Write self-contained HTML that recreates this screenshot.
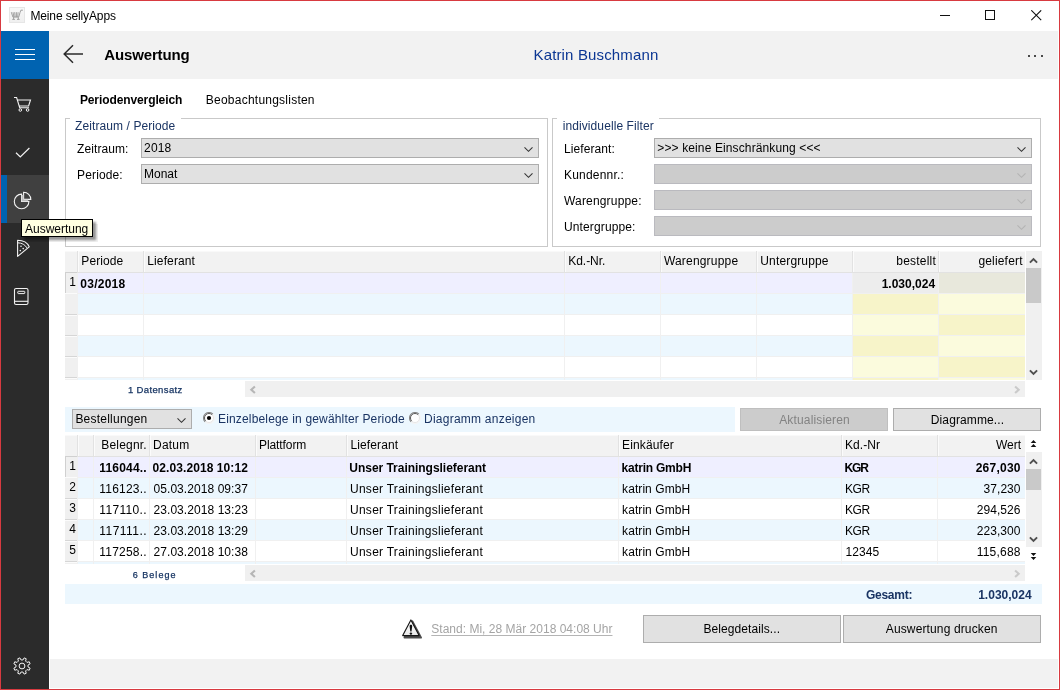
<!DOCTYPE html>
<html lang="de">
<head>
<meta charset="utf-8">
<title>Meine sellyApps</title>
<style>
*{box-sizing:border-box;margin:0;padding:0}
html,body{width:1060px;height:690px;overflow:hidden;background:#fff}
body{font-family:"Liberation Sans",sans-serif;font-size:12px;color:#000;position:relative}
#root{position:absolute;left:0;top:0;width:1060px;height:690px;overflow:hidden;will-change:transform}
#root div,#root svg{position:absolute}
.t{white-space:nowrap;line-height:14px;height:14px}
.b{font-weight:bold}
.navy{color:#1a3463}
.combo{background:#e1e1e1;border:1px solid #adadad}
.combo.dis{background:#cccccc;border-color:#bababf}
.grp{border:1px solid #c9c9c9}
.btn{background:#e1e1e1;border:1px solid #adadad}
.btn.dis{background:#cccccc;border-color:#bfbfbf}
.hd{background:#f2f2f2}
.vl{width:1px;background:#f0f0f0}
.hl{height:1px;background:#f0f0f0}
</style>
</head>
<body>
<div id="root">
<div style="left:0px;top:0px;width:1060px;height:690px;background:#d83a40"></div>
<div style="left:1px;top:1px;width:1058px;height:688px;background:#fff"></div>
<svg style="left:9px;top:7px" width="16" height="16" viewBox="0 0 16 16"><defs><linearGradient id="ig" x1="0" y1="0" x2="0" y2="1"><stop offset="0" stop-color="#f8f8f8"/><stop offset="1" stop-color="#efefef"/></linearGradient></defs><rect x="0" y="0" width="16" height="16" fill="url(#ig)"/><rect x="0.500" y="0.500" width="15" height="15" fill="none" stroke="#e6e6e6"/><path d="M2.300 5.200l1.600 4.900h5.800l1.300-4.500l.900-2.400h2M4 5.200l.900 4.800M5.700 5.200l.400 4.800M7.400 5.200v4.800M9.100 5.200l-.400 4.800" fill="none" stroke="#979797" stroke-width="0.900"/><path d="M4.600 10.200v1.900M9.300 10.200v1.900M3.300 12.400h2.600M8 12.400h2.600" fill="none" stroke="#979797" stroke-width="0.900"/></svg>
<div class="t" style="left:30.40px;top:9px;letter-spacing:-0.129px;">Meine sellyApps</div>
<div style="left:940px;top:15px;width:10px;height:1px;background:#111"></div>
<div style="left:985px;top:10px;width:10px;height:10px;border:1px solid #111"></div>
<svg style="left:1030.6px;top:10px" width="11" height="11" viewBox="0 0 11 11"><path d="M0.3 0.3L10.2 10.2M10.2 0.3L0.3 10.2" stroke="#111" stroke-width="1.1" fill="none"/></svg>
<div style="left:1px;top:31px;width:48px;height:48px;background:#0063b1"></div>
<div style="left:15px;top:49px;width:20px;height:1px;background:#fff"></div>
<div style="left:15px;top:54px;width:20px;height:1px;background:#fff"></div>
<div style="left:15px;top:59px;width:20px;height:1px;background:#fff"></div>
<div style="left:1px;top:79px;width:48px;height:610px;background:#2b2b2b"></div>
<div style="left:1px;top:175px;width:48px;height:48px;background:#404040"></div>
<div style="left:1px;top:175px;width:6px;height:48px;background:#0063b1"></div>
<div style="left:49px;top:31px;width:1009px;height:48px;background:#f2f2f2"></div>
<svg style="left:62px;top:44px" width="23" height="20" viewBox="0 0 23 20"><path d="M21 10H2.2M11 1.3L2.2 10L11 18.7" fill="none" stroke="#2b2b2b" stroke-width="1.5"/></svg>
<div class="t b" style="left:104.30px;top:46px;letter-spacing:-0.147px;font-size:15px;line-height:17px;height:17px;">Auswertung</div>
<div class="t" style="left:533.50px;top:46px;letter-spacing:0.152px;font-size:15px;line-height:17px;height:17px;color:#0b3693">Katrin Buschmann</div>
<div style="left:1027.5px;top:55.3px;width:2.0px;height:2.0px;background:#111;border-radius:1px"></div>
<div style="left:1034.4px;top:55.3px;width:2.0px;height:2.0px;background:#111;border-radius:1px"></div>
<div style="left:1041.3px;top:55.3px;width:2.0px;height:2.0px;background:#111;border-radius:1px"></div>
<div style="left:50px;top:659px;width:1008px;height:29px;background:#f2f2f2"></div>
<svg style="left:13px;top:96px" width="20" height="17" viewBox="0 0 20 17"><path d="M1 1.500h2.600l3.100 10.200h9.300M4.300 4h13.200l-1.900 6H6.200" fill="none" stroke="#f2f2f2" stroke-width="1.100"/><circle cx="7.300" cy="14" r="1.300" fill="none" stroke="#f2f2f2" stroke-width="1"/><circle cx="14.600" cy="14" r="1.300" fill="none" stroke="#f2f2f2" stroke-width="1"/></svg>
<svg style="left:15px;top:147px" width="16" height="12" viewBox="0 0 16 12"><path d="M1 5.800L5.300 10L14.400 1" fill="none" stroke="#f2f2f2" stroke-width="1.200"/></svg>
<svg style="left:12px;top:190px" width="21" height="21" viewBox="0 0 21 21"><path d="M9.600 4.100A7.300 7.300 0 1 0 16.900 11.400H9.600Z" fill="none" stroke="#f2f2f2" stroke-width="1.100"/><path d="M11.600 2.200A7.200 7.200 0 0 1 18.800 9.400H11.600Z" fill="none" stroke="#f2f2f2" stroke-width="1.100"/><path d="M10.600 5v5.400h5.400" fill="none" stroke="#bdbdbd" stroke-width="1.600"/></svg>
<svg style="left:15px;top:238px" width="16" height="20" viewBox="0 0 16 20"><path d="M2.600 2.200C8 2.200 12.600 5 14.200 8.800L2.600 18.400Z" fill="none" stroke="#f2f2f2" stroke-width="1.100" stroke-linejoin="round"/><path d="M2.800 4.800C6.800 4.800 10.300 6.900 11.900 9.900" fill="none" stroke="#f2f2f2" stroke-width="1"/><circle cx="6" cy="8.300" r="0.800" fill="#f2f2f2"/><circle cx="8.200" cy="10.600" r="0.800" fill="#f2f2f2"/><circle cx="5.300" cy="12.600" r="0.800" fill="#f2f2f2"/></svg>
<svg style="left:13px;top:287px" width="17" height="19" viewBox="0 0 17 19"><rect x="1.500" y="1.500" width="13.500" height="16" rx="1.600" fill="none" stroke="#f2f2f2" stroke-width="1.100"/><path d="M1.500 14.300h13.500" stroke="#f2f2f2" stroke-width="1.100"/><rect x="4.800" y="4.300" width="7" height="2.300" rx="0.600" fill="none" stroke="#f2f2f2" stroke-width="1"/></svg>
<svg style="left:12.1px;top:656.1px" width="20" height="20" viewBox="0 0 20 20"><path d="M12.15 1.88L14.22 2.74L13.59 5.06L14.94 6.41L17.26 5.78L18.12 7.85L16.02 9.05L16.02 10.95L18.12 12.15L17.26 14.22L14.94 13.59L13.59 14.94L14.22 17.26L12.15 18.12L10.95 16.02L9.05 16.02L7.85 18.12L5.78 17.26L6.41 14.94L5.06 13.59L2.74 14.22L1.88 12.15L3.98 10.95L3.98 9.05L1.88 7.85L2.74 5.78L5.06 6.41L6.41 5.06L5.78 2.74L7.85 1.88L9.05 3.98L10.95 3.98Z" fill="none" stroke="#f2f2f2" stroke-width="1" stroke-linejoin="round"/><circle cx="10" cy="10" r="2.9" fill="none" stroke="#f2f2f2" stroke-width="1"/></svg>
<div class="t b" style="left:79.90px;top:93px;letter-spacing:-0.100px;">Periodenvergleich</div>
<div class="t" style="left:205.80px;top:93px;letter-spacing:0.235px;">Beobachtungslisten</div>
<div class="grp" style="left:65px;top:118px;width:483px;height:129px;"></div>
<div style="left:70px;top:118px;width:111px;height:1px;background:#fff"></div>
<div class="t navy" style="left:75.10px;top:119px;letter-spacing:0.088px;">Zeitraum / Periode</div>
<div class="grp" style="left:552px;top:118px;width:489px;height:129px;"></div>
<div style="left:557px;top:118px;width:102px;height:1px;background:#fff"></div>
<div class="t navy" style="left:562.70px;top:119px;letter-spacing:0.094px;">individuelle Filter</div>
<div class="t" style="left:77.10px;top:142px;letter-spacing:0.075px;">Zeitraum:</div>
<div class="t" style="left:77.10px;top:168px;letter-spacing:0.129px;">Periode:</div>
<div class="combo" style="left:141px;top:138px;width:398px;height:20px;"></div>
<svg style="left:522.9px;top:146.0px" width="11" height="7" viewBox="0 0 11 7"><path d="M1.500 1.300L5.500 5.300L9.500 1.300" fill="none" stroke="#333" stroke-width="1.050"/></svg>
<div class="t" style="left:144.10px;top:141px;letter-spacing:0.133px;">2018</div>
<div class="combo" style="left:141px;top:164px;width:398px;height:20px;"></div>
<svg style="left:522.9px;top:172.0px" width="11" height="7" viewBox="0 0 11 7"><path d="M1.500 1.300L5.500 5.300L9.500 1.300" fill="none" stroke="#333" stroke-width="1.050"/></svg>
<div class="t" style="left:144.10px;top:167px;letter-spacing:-0.025px;">Monat</div>
<div class="t" style="left:564.00px;top:142px;letter-spacing:0.078px;">Lieferant:</div>
<div class="t" style="left:564.00px;top:168px;letter-spacing:0.200px;">Kundennr.:</div>
<div class="t" style="left:564.00px;top:194px;letter-spacing:0.173px;">Warengruppe:</div>
<div class="t" style="left:564.00px;top:220px;letter-spacing:0.127px;">Untergruppe:</div>
<div class="combo" style="left:654px;top:138px;width:378px;height:20px;"></div>
<svg style="left:1015.9px;top:146.0px" width="11" height="7" viewBox="0 0 11 7"><path d="M1.500 1.300L5.500 5.300L9.500 1.300" fill="none" stroke="#333" stroke-width="1.050"/></svg>
<div class="t" style="left:657.30px;top:141px;letter-spacing:0.123px;">&gt;&gt;&gt; keine Einschränkung &lt;&lt;&lt;</div>
<div class="combo dis" style="left:654px;top:164px;width:378px;height:20px;"></div>
<svg style="left:1015.9px;top:172.0px" width="11" height="7" viewBox="0 0 11 7"><path d="M1.500 1.300L5.500 5.300L9.500 1.300" fill="none" stroke="#b3b3b3" stroke-width="1.050"/></svg>
<div class="combo dis" style="left:654px;top:190px;width:378px;height:20px;"></div>
<svg style="left:1015.9px;top:198.0px" width="11" height="7" viewBox="0 0 11 7"><path d="M1.500 1.300L5.500 5.300L9.500 1.300" fill="none" stroke="#b3b3b3" stroke-width="1.050"/></svg>
<div class="combo dis" style="left:654px;top:216px;width:378px;height:20px;"></div>
<svg style="left:1015.9px;top:224.0px" width="11" height="7" viewBox="0 0 11 7"><path d="M1.500 1.300L5.500 5.300L9.500 1.300" fill="none" stroke="#b3b3b3" stroke-width="1.050"/></svg>
<div class="hd" style="left:65px;top:251px;width:960px;height:21px;"></div>
<div style="left:65px;top:251px;width:960px;height:1px;background:#f9f9f9"></div>
<div style="left:78px;top:272px;width:774px;height:21px;background:#efefff"></div>
<div style="left:852px;top:272px;width:86px;height:21px;background:#ededed"></div>
<div style="left:938px;top:272px;width:87px;height:21px;background:#e8e8dc"></div>
<div style="left:65px;top:272px;width:12px;height:21px;background:#f0f0f0"></div>
<div style="left:78px;top:293px;width:774px;height:21px;background:#ecf7fe"></div>
<div style="left:852px;top:293px;width:86px;height:21px;background:#f7f4c9"></div>
<div style="left:938px;top:293px;width:87px;height:21px;background:#fbfbdd"></div>
<div style="left:65px;top:293px;width:12px;height:21px;background:#f0f0f0"></div>
<div style="left:78px;top:314px;width:774px;height:21px;background:#fff"></div>
<div style="left:852px;top:314px;width:86px;height:21px;background:#fbfbdd"></div>
<div style="left:938px;top:314px;width:87px;height:21px;background:#f7f4c9"></div>
<div style="left:65px;top:314px;width:12px;height:21px;background:#f0f0f0"></div>
<div style="left:78px;top:335px;width:774px;height:21px;background:#ecf7fe"></div>
<div style="left:852px;top:335px;width:86px;height:21px;background:#f7f4c9"></div>
<div style="left:938px;top:335px;width:87px;height:21px;background:#fbfbdd"></div>
<div style="left:65px;top:335px;width:12px;height:21px;background:#f0f0f0"></div>
<div style="left:78px;top:356px;width:774px;height:21px;background:#fff"></div>
<div style="left:852px;top:356px;width:86px;height:21px;background:#fbfbdd"></div>
<div style="left:938px;top:356px;width:87px;height:21px;background:#f7f4c9"></div>
<div style="left:65px;top:356px;width:12px;height:21px;background:#f0f0f0"></div>
<div style="left:78px;top:377px;width:774px;height:3px;background:#ecf7fe"></div>
<div style="left:852px;top:377px;width:86px;height:3px;background:#f7f4c9"></div>
<div style="left:938px;top:377px;width:87px;height:3px;background:#fbfbdd"></div>
<div style="left:65px;top:377px;width:12px;height:3px;background:#f0f0f0"></div>
<div class="vl" style="left:77px;top:251px;width:1px;height:129px;"></div>
<div style="left:77px;top:251px;width:1px;height:21px;background:#e2e2e2"></div>
<div style="left:78px;top:251px;width:1px;height:21px;background:#fbfbfb"></div>
<div class="vl" style="left:143px;top:251px;width:1px;height:129px;"></div>
<div style="left:143px;top:251px;width:1px;height:21px;background:#e2e2e2"></div>
<div style="left:144px;top:251px;width:1px;height:21px;background:#fbfbfb"></div>
<div class="vl" style="left:564px;top:251px;width:1px;height:129px;"></div>
<div style="left:564px;top:251px;width:1px;height:21px;background:#e2e2e2"></div>
<div style="left:565px;top:251px;width:1px;height:21px;background:#fbfbfb"></div>
<div class="vl" style="left:660px;top:251px;width:1px;height:129px;"></div>
<div style="left:660px;top:251px;width:1px;height:21px;background:#e2e2e2"></div>
<div style="left:661px;top:251px;width:1px;height:21px;background:#fbfbfb"></div>
<div class="vl" style="left:756px;top:251px;width:1px;height:129px;"></div>
<div style="left:756px;top:251px;width:1px;height:21px;background:#e2e2e2"></div>
<div style="left:757px;top:251px;width:1px;height:21px;background:#fbfbfb"></div>
<div class="vl" style="left:852px;top:251px;width:1px;height:129px;"></div>
<div style="left:852px;top:251px;width:1px;height:21px;background:#e2e2e2"></div>
<div style="left:853px;top:251px;width:1px;height:21px;background:#fbfbfb"></div>
<div class="vl" style="left:938px;top:251px;width:1px;height:129px;"></div>
<div style="left:938px;top:251px;width:1px;height:21px;background:#e2e2e2"></div>
<div style="left:939px;top:251px;width:1px;height:21px;background:#fbfbfb"></div>
<div style="left:65px;top:272px;width:960px;height:1px;background:#e2e2e2"></div>
<div class="hl" style="left:77px;top:293px;width:948px;height:1px;"></div>
<div style="left:65px;top:293px;width:12px;height:1px;background:#fbfbfb"></div>
<div class="hl" style="left:77px;top:314px;width:948px;height:1px;"></div>
<div style="left:65px;top:314px;width:12px;height:1px;background:#d6d6d6"></div>
<div style="left:65px;top:315px;width:12px;height:1px;background:#fbfbfb"></div>
<div class="hl" style="left:77px;top:335px;width:948px;height:1px;"></div>
<div style="left:65px;top:335px;width:12px;height:1px;background:#d6d6d6"></div>
<div style="left:65px;top:336px;width:12px;height:1px;background:#fbfbfb"></div>
<div class="hl" style="left:77px;top:356px;width:948px;height:1px;"></div>
<div style="left:65px;top:356px;width:12px;height:1px;background:#d6d6d6"></div>
<div style="left:65px;top:357px;width:12px;height:1px;background:#fbfbfb"></div>
<div class="hl" style="left:77px;top:377px;width:948px;height:1px;"></div>
<div style="left:65px;top:377px;width:12px;height:1px;background:#d6d6d6"></div>
<div style="left:65px;top:378px;width:12px;height:1px;background:#fbfbfb"></div>
<div style="left:65px;top:272px;width:12px;height:1px;background:#d0d0d0"></div>
<div style="left:65px;top:272px;width:1px;height:21px;background:#d0d0d0"></div>
<div class="t" style="left:81.30px;top:254px;letter-spacing:0.083px;">Periode</div>
<div class="t" style="left:147.30px;top:254px;letter-spacing:0.112px;">Lieferant</div>
<div class="t" style="left:568.30px;top:254px;letter-spacing:-0.050px;">Kd.-Nr.</div>
<div class="t" style="left:663.90px;top:254px;letter-spacing:0.190px;">Warengruppe</div>
<div class="t" style="left:760.30px;top:254px;letter-spacing:0.150px;">Untergruppe</div>
<div class="t" style="left:896.30px;top:254px;letter-spacing:0.214px;">bestellt</div>
<div class="t" style="left:978.40px;top:254px;letter-spacing:0.175px;">geliefert</div>
<div class="t" style="left:69.20px;top:275px;letter-spacing:0.000px;">1</div>
<div class="t b" style="left:80.30px;top:277px;letter-spacing:0.250px;">03/2018</div>
<div class="t b" style="left:881.70px;top:277px;letter-spacing:-0.000px;">1.030,024</div>
<div style="left:1026px;top:251px;width:16px;height:129px;background:#f0f0f0"><svg style="left:3px;top:5.5px" width="9" height="7" viewBox="0 0 9 7"><path d="M0.900 5.600L4.500 2L8.100 5.600" fill="none" stroke="#505050" stroke-width="1.900"/></svg><svg style="left:3px;top:117.5px" width="9" height="7" viewBox="0 0 9 7"><path d="M0.900 1.400L4.500 5L8.100 1.400" fill="none" stroke="#505050" stroke-width="1.900"/></svg><div style="left:0px;top:17px;width:15px;height:35px;background:#c9c9c9"></div></div>
<div class="t" style="left:127.90px;top:384px;letter-spacing:0.373px;font-size:9.5px;line-height:11.5px;height:11.5px;color:#12305f;-webkit-text-stroke:0.25px #12305f">1 Datensatz</div>
<div style="left:245px;top:381px;width:780px;height:16px;background:#f0f0f0"><svg style="left:4px;top:3.5px" width="7" height="9" viewBox="0 0 7 9"><path d="M5.900 1.500L2.300 4.800L5.900 8.100" fill="none" stroke="#b6b6b6" stroke-width="2.100"/></svg><svg style="right:4px;top:3.5px" width="7" height="9" viewBox="0 0 7 9"><path d="M1.100 1.500L4.700 4.800L1.100 8.100" fill="none" stroke="#cacaca" stroke-width="2.100"/></svg></div>
<div style="left:65px;top:407px;width:670px;height:25px;background:#ecf7fe"></div>
<div class="combo" style="left:72px;top:409px;width:120px;height:20px;"></div>
<svg style="left:175.9px;top:417.0px" width="11" height="7" viewBox="0 0 11 7"><path d="M1.500 1.300L5.500 5.300L9.500 1.300" fill="none" stroke="#333" stroke-width="1.050"/></svg>
<div class="t" style="left:75.40px;top:412px;letter-spacing:0.227px;">Bestellungen</div>
<svg style="left:203px;top:412px" width="12" height="12" viewBox="0 0 12 12"><circle cx="6" cy="6" r="5" fill="#fff"/><path d="M2.100 9.900A5.500 5.500 0 0 1 9.900 2.100" fill="none" stroke="#858585" stroke-width="1.100"/><path d="M2.800 9.200A4.500 4.500 0 0 1 9.200 2.800" fill="none" stroke="#5a5a5a" stroke-width="1"/><path d="M9.900 2.100A5.500 5.500 0 0 1 2.100 9.900" fill="none" stroke="#f4f4f4" stroke-width="1.100"/><path d="M9.200 2.800A4.500 4.500 0 0 1 2.800 9.200" fill="none" stroke="#e6e6e6" stroke-width="1"/><circle cx="6" cy="6" r="2.100" fill="#000"/></svg>
<div class="t navy" style="left:218.00px;top:412px;letter-spacing:0.166px;">Einzelbelege in gewählter Periode</div>
<svg style="left:409px;top:412px" width="12" height="12" viewBox="0 0 12 12"><circle cx="6" cy="6" r="5" fill="#fff"/><path d="M2.100 9.900A5.500 5.500 0 0 1 9.900 2.100" fill="none" stroke="#858585" stroke-width="1.100"/><path d="M2.800 9.200A4.500 4.500 0 0 1 9.200 2.800" fill="none" stroke="#5a5a5a" stroke-width="1"/><path d="M9.900 2.100A5.500 5.500 0 0 1 2.100 9.900" fill="none" stroke="#f4f4f4" stroke-width="1.100"/><path d="M9.200 2.800A4.500 4.500 0 0 1 2.800 9.200" fill="none" stroke="#e6e6e6" stroke-width="1"/></svg>
<div class="t navy" style="left:424.00px;top:412px;letter-spacing:0.244px;">Diagramm anzeigen</div>
<div class="btn dis" style="left:740px;top:408px;width:148px;height:23px;"></div>
<div class="t" style="left:779.20px;top:413px;letter-spacing:0.158px;color:#838383">Aktualisieren</div>
<div class="btn" style="left:893px;top:408px;width:148px;height:23px;"></div>
<div class="t" style="left:930.80px;top:413px;letter-spacing:0.118px;">Diagramme...</div>
<div class="hd" style="left:65px;top:435px;width:960px;height:21px;"></div>
<div style="left:65px;top:435px;width:960px;height:1px;background:#f9f9f9"></div>
<div style="left:78px;top:456px;width:947px;height:21px;background:#efefff"></div>
<div style="left:65px;top:456px;width:12px;height:21px;background:#f0f0f0"></div>
<div style="left:78px;top:477px;width:947px;height:21px;background:#ecf7fe"></div>
<div style="left:65px;top:477px;width:12px;height:21px;background:#f0f0f0"></div>
<div style="left:78px;top:498px;width:947px;height:21px;background:#fff"></div>
<div style="left:65px;top:498px;width:12px;height:21px;background:#f0f0f0"></div>
<div style="left:78px;top:519px;width:947px;height:21px;background:#ecf7fe"></div>
<div style="left:65px;top:519px;width:12px;height:21px;background:#f0f0f0"></div>
<div style="left:78px;top:540px;width:947px;height:21px;background:#fff"></div>
<div style="left:65px;top:540px;width:12px;height:21px;background:#f0f0f0"></div>
<div style="left:78px;top:561px;width:947px;height:3px;background:#ecf7fe"></div>
<div style="left:65px;top:561px;width:12px;height:3px;background:#f0f0f0"></div>
<div class="vl" style="left:77px;top:435px;width:1px;height:129px;"></div>
<div style="left:77px;top:435px;width:1px;height:21px;background:#e2e2e2"></div>
<div style="left:78px;top:435px;width:1px;height:21px;background:#fbfbfb"></div>
<div class="vl" style="left:93px;top:435px;width:1px;height:129px;"></div>
<div style="left:93px;top:435px;width:1px;height:21px;background:#e2e2e2"></div>
<div style="left:94px;top:435px;width:1px;height:21px;background:#fbfbfb"></div>
<div class="vl" style="left:149px;top:435px;width:1px;height:129px;"></div>
<div style="left:149px;top:435px;width:1px;height:21px;background:#e2e2e2"></div>
<div style="left:150px;top:435px;width:1px;height:21px;background:#fbfbfb"></div>
<div class="vl" style="left:255px;top:435px;width:1px;height:129px;"></div>
<div style="left:255px;top:435px;width:1px;height:21px;background:#e2e2e2"></div>
<div style="left:256px;top:435px;width:1px;height:21px;background:#fbfbfb"></div>
<div class="vl" style="left:346px;top:435px;width:1px;height:129px;"></div>
<div style="left:346px;top:435px;width:1px;height:21px;background:#e2e2e2"></div>
<div style="left:347px;top:435px;width:1px;height:21px;background:#fbfbfb"></div>
<div class="vl" style="left:618px;top:435px;width:1px;height:129px;"></div>
<div style="left:618px;top:435px;width:1px;height:21px;background:#e2e2e2"></div>
<div style="left:619px;top:435px;width:1px;height:21px;background:#fbfbfb"></div>
<div class="vl" style="left:841px;top:435px;width:1px;height:129px;"></div>
<div style="left:841px;top:435px;width:1px;height:21px;background:#e2e2e2"></div>
<div style="left:842px;top:435px;width:1px;height:21px;background:#fbfbfb"></div>
<div class="vl" style="left:937px;top:435px;width:1px;height:129px;"></div>
<div style="left:937px;top:435px;width:1px;height:21px;background:#e2e2e2"></div>
<div style="left:938px;top:435px;width:1px;height:21px;background:#fbfbfb"></div>
<div style="left:65px;top:456px;width:960px;height:1px;background:#e2e2e2"></div>
<div class="hl" style="left:77px;top:477px;width:948px;height:1px;"></div>
<div style="left:65px;top:477px;width:12px;height:1px;background:#fbfbfb"></div>
<div class="hl" style="left:77px;top:498px;width:948px;height:1px;"></div>
<div style="left:65px;top:498px;width:12px;height:1px;background:#d6d6d6"></div>
<div style="left:65px;top:499px;width:12px;height:1px;background:#fbfbfb"></div>
<div class="hl" style="left:77px;top:519px;width:948px;height:1px;"></div>
<div style="left:65px;top:519px;width:12px;height:1px;background:#d6d6d6"></div>
<div style="left:65px;top:520px;width:12px;height:1px;background:#fbfbfb"></div>
<div class="hl" style="left:77px;top:540px;width:948px;height:1px;"></div>
<div style="left:65px;top:540px;width:12px;height:1px;background:#d6d6d6"></div>
<div style="left:65px;top:541px;width:12px;height:1px;background:#fbfbfb"></div>
<div class="hl" style="left:77px;top:561px;width:948px;height:1px;"></div>
<div style="left:65px;top:561px;width:12px;height:1px;background:#d6d6d6"></div>
<div style="left:65px;top:562px;width:12px;height:1px;background:#fbfbfb"></div>
<div style="left:65px;top:456px;width:12px;height:1px;background:#d0d0d0"></div>
<div style="left:65px;top:456px;width:1px;height:21px;background:#d0d0d0"></div>
<div class="t" style="left:101.30px;top:438px;letter-spacing:0.186px;">Belegnr.</div>
<div class="t" style="left:153.00px;top:438px;letter-spacing:0.225px;">Datum</div>
<div class="t" style="left:259.00px;top:438px;letter-spacing:-0.087px;">Plattform</div>
<div class="t" style="left:350.50px;top:438px;letter-spacing:0.113px;">Lieferant</div>
<div class="t" style="left:622.00px;top:438px;letter-spacing:0.137px;">Einkäufer</div>
<div class="t" style="left:845.00px;top:438px;letter-spacing:0.080px;">Kd.-Nr</div>
<div class="t" style="left:995.90px;top:438px;letter-spacing:0.000px;">Wert</div>
<div class="t" style="left:69.20px;top:459px;letter-spacing:0.000px;">1</div>
<div class="t b" style="left:99.30px;top:461px;letter-spacing:0.186px;">116044..</div>
<div class="t b" style="left:152.50px;top:461px;letter-spacing:0.087px;">02.03.2018 10:12</div>
<div class="t b" style="left:349.30px;top:461px;letter-spacing:-0.030px;">Unser Trainingslieferant</div>
<div class="t b" style="left:621.60px;top:461px;letter-spacing:-0.230px;">katrin GmbH</div>
<div class="t b" style="left:844.40px;top:461px;letter-spacing:-1.050px;">KGR</div>
<div class="t b" style="left:975.70px;top:461px;letter-spacing:0.233px;">267,030</div>
<div class="t" style="left:69.20px;top:480px;letter-spacing:0.000px;">2</div>
<div class="t" style="left:99.30px;top:482px;letter-spacing:0.214px;">116123..</div>
<div class="t" style="left:153.50px;top:482px;letter-spacing:0.067px;">05.03.2018 09:37</div>
<div class="t" style="left:350.00px;top:482px;letter-spacing:0.265px;">Unser Trainingslieferant</div>
<div class="t" style="left:622.10px;top:482px;letter-spacing:0.070px;">katrin GmbH</div>
<div class="t" style="left:845.00px;top:482px;letter-spacing:-0.400px;">KGR</div>
<div class="t" style="left:983.60px;top:482px;letter-spacing:0.040px;">37,230</div>
<div class="t" style="left:69.20px;top:501px;letter-spacing:0.000px;">3</div>
<div class="t" style="left:99.30px;top:503px;letter-spacing:0.343px;">117110..</div>
<div class="t" style="left:153.50px;top:503px;letter-spacing:0.067px;">23.03.2018 13:23</div>
<div class="t" style="left:350.00px;top:503px;letter-spacing:0.265px;">Unser Trainingslieferant</div>
<div class="t" style="left:622.10px;top:503px;letter-spacing:0.070px;">katrin GmbH</div>
<div class="t" style="left:845.00px;top:503px;letter-spacing:-0.400px;">KGR</div>
<div class="t" style="left:976.70px;top:503px;letter-spacing:0.067px;">294,526</div>
<div class="t" style="left:69.20px;top:522px;letter-spacing:0.000px;">4</div>
<div class="t" style="left:99.30px;top:524px;letter-spacing:0.471px;">117111..</div>
<div class="t" style="left:153.50px;top:524px;letter-spacing:0.067px;">23.03.2018 13:29</div>
<div class="t" style="left:350.00px;top:524px;letter-spacing:0.265px;">Unser Trainingslieferant</div>
<div class="t" style="left:622.10px;top:524px;letter-spacing:0.070px;">katrin GmbH</div>
<div class="t" style="left:845.00px;top:524px;letter-spacing:-0.400px;">KGR</div>
<div class="t" style="left:976.70px;top:524px;letter-spacing:0.067px;">223,300</div>
<div class="t" style="left:69.20px;top:543px;letter-spacing:0.000px;">5</div>
<div class="t" style="left:99.30px;top:545px;letter-spacing:0.214px;">117258..</div>
<div class="t" style="left:153.50px;top:545px;letter-spacing:0.067px;">27.03.2018 10:38</div>
<div class="t" style="left:350.00px;top:545px;letter-spacing:0.265px;">Unser Trainingslieferant</div>
<div class="t" style="left:622.10px;top:545px;letter-spacing:0.070px;">katrin GmbH</div>
<div class="t" style="left:845.60px;top:545px;letter-spacing:0.075px;">12345</div>
<div class="t" style="left:976.70px;top:545px;letter-spacing:0.217px;">115,688</div>
<div style="left:1025px;top:435px;width:17px;height:129px;background:#fff"><svg style="left:4px;top:3.5px" width="9" height="9" viewBox="0 0 9 9"><path d="M1.700 4L4.500 1L7.300 4ZM1.700 8L4.500 5L7.300 8Z" fill="#111"/></svg><svg style="left:4px;top:116.500px" width="9" height="9" viewBox="0 0 9 9"><path d="M1.700 1L4.500 4L7.300 1ZM1.700 5L4.500 8L7.300 5Z" fill="#111"/></svg></div>
<div style="left:1026px;top:452px;width:16px;height:95px;background:#f0f0f0"><svg style="left:3px;top:5.5px" width="9" height="7" viewBox="0 0 9 7"><path d="M0.900 5.600L4.500 2L8.100 5.600" fill="none" stroke="#505050" stroke-width="1.900"/></svg><svg style="left:3px;top:83.500px" width="9" height="7" viewBox="0 0 9 7"><path d="M0.900 1.400L4.500 5L8.100 1.400" fill="none" stroke="#505050" stroke-width="1.900"/></svg><div style="left:0px;top:17px;width:15px;height:21px;background:#c9c9c9"></div></div>
<div class="t" style="left:132.70px;top:570px;letter-spacing:1.036px;font-size:9px;line-height:11px;height:11px;color:#12305f;-webkit-text-stroke:0.25px #12305f">6 Belege</div>
<div style="left:245px;top:565px;width:780px;height:16px;background:#f0f0f0"><svg style="left:4px;top:3.5px" width="7" height="9" viewBox="0 0 7 9"><path d="M5.900 1.500L2.300 4.800L5.900 8.100" fill="none" stroke="#b6b6b6" stroke-width="2.100"/></svg><svg style="right:4px;top:3.5px" width="7" height="9" viewBox="0 0 7 9"><path d="M1.100 1.500L4.700 4.800L1.100 8.100" fill="none" stroke="#cacaca" stroke-width="2.100"/></svg></div>
<div style="left:65px;top:584px;width:977px;height:20px;background:#ecf7fe"></div>
<div class="t b navy" style="left:865.90px;top:588px;letter-spacing:-0.250px;">Gesamt:</div>
<div class="t b navy" style="left:978.20px;top:588px;letter-spacing:0.012px;">1.030,024</div>
<svg style="left:400px;top:617px" width="24" height="24" viewBox="0 0 24 24"><defs><linearGradient id="wg" x1="0" y1="0" x2="0" y2="1"><stop offset="0" stop-color="#ffffff"/><stop offset="1" stop-color="#e9e9e9"/></linearGradient></defs><path d="M12.400 4.400L21 20.600H4.500Z" fill="#4c4c4c" stroke="#4c4c4c" stroke-width="2" stroke-linejoin="round"/><path d="M10.900 2.900L19.100 18.600H2.700Z" fill="url(#wg)" stroke="#161616" stroke-width="1.150" stroke-linejoin="round"/><path d="M10.900 7.700c1 0 1.400.600 1.300 1.500l-.700 5.400h-1.200l-.700-5.400c-.100-.900.300-1.500 1.300-1.500Z" fill="#111"/><circle cx="10.900" cy="16.600" r="1.200" fill="#111"/></svg>
<div class="t" style="left:431.30px;top:622px;letter-spacing:0.013px;color:#a4a4a4;text-decoration:underline;text-underline-offset:2px;text-decoration-thickness:1px;text-decoration-color:#b4b4b4">Stand: Mi, 28 Mär 2018 04:08 Uhr</div>
<div class="btn" style="left:643px;top:615px;width:198px;height:28px;"></div>
<div class="t" style="left:703.40px;top:622px;letter-spacing:0.086px;">Belegdetails...</div>
<div class="btn" style="left:843px;top:615px;width:198px;height:28px;"></div>
<div class="t" style="left:885.80px;top:622px;letter-spacing:0.129px;">Auswertung drucken</div>
<div style="left:21px;top:219px;width:72px;height:18px;background:#ffffe1;border:1px solid #000;box-shadow:3px 3px 2px rgba(0,0,0,0.38),5px 5px 0 rgba(0,0,0,0.06)"></div>
<div class="t" style="left:25.00px;top:222px;letter-spacing:-0.011px;">Auswertung</div>
</div>
</body>
</html>
